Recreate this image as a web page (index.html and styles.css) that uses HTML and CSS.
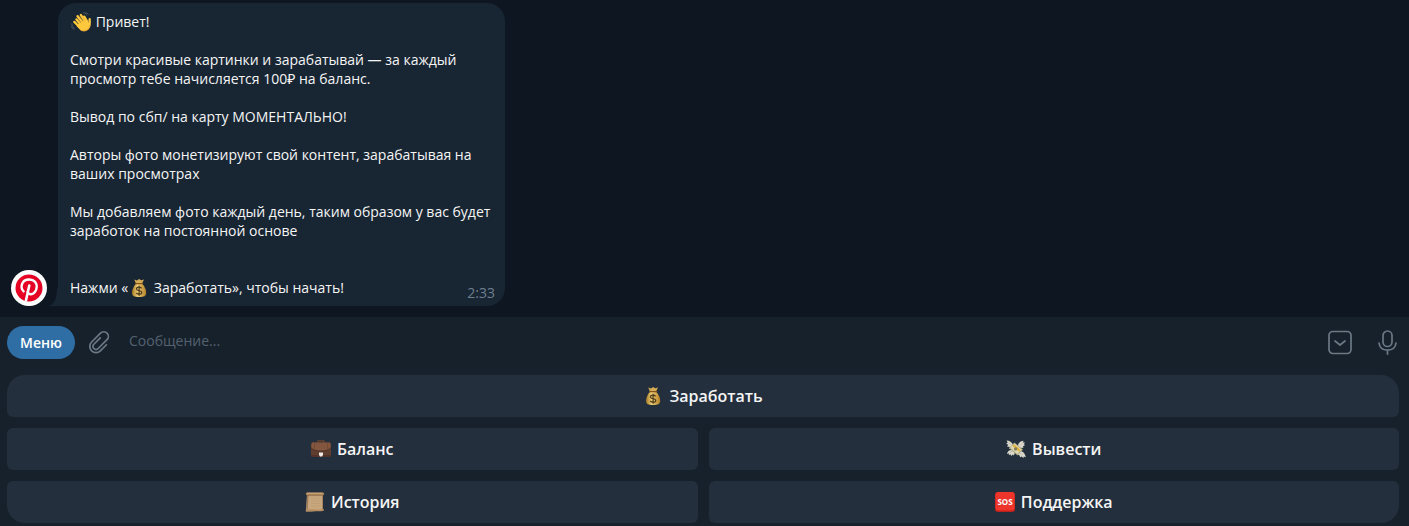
FILE: index.html
```html
<!DOCTYPE html>
<html lang="ru">
<head>
  <meta charset="UTF-8" />
  <meta name="viewport" content="width=device-width, initial-scale=1.0"/>
  <title>Чат</title>
  <link rel="stylesheet" href="styles.css">
</head>
<body>

  <!-- Shared icons -->
  <svg class="sprite" aria-hidden="true">
    <linearGradient id="gold" x1="0" x2="1" y1="0" y2="0">
      <stop offset="0" stop-color="#a57922"/>
      <stop offset=".4" stop-color="#f0cf78"/>
      <stop offset="1" stop-color="#b27f25"/>
    </linearGradient>
    <symbol id="money-bag" viewBox="0 0 20 20">
      <path d="M7 5.5 5.2 1.6 8 2.4 10 1l2.2 1.3 2.8-.8L13 5.5z" fill="#d5ac55"/>
      <path d="M7.3 5.5h5.6c2.6 2.6 4.3 6 4.3 9.4 0 2.9-2.2 4.1-7.1 4.1S3 17.8 3 14.9c0-3.4 1.7-6.8 4.3-9.4z" fill="url(#gold)"/>
      <path d="M6.6 5.7h7" stroke="#80551b" stroke-width="1.3" stroke-linecap="round"/>
      <path d="M12.6 10.3c-.6-.9-1.5-1.2-2.6-1.2-1.5 0-2.5.7-2.5 1.8 0 2.5 5.3 1 5.3 3.5 0 1.100-1.100 1.800-2.700 1.800-1.300 0-2.300-.5-2.900-1.400M10.100 7.700v10" fill="none" stroke="#4b3a1b" stroke-width="1.2"/>
    </symbol>
  </svg>

  <main class="chat">
    <div class="avatar">
      <svg viewBox="0 0 36 36" role="img" aria-label="Pinterest">
        <circle cx="18" cy="18" r="18" fill="#fff"/>
        <circle cx="18" cy="18" r="13.5" fill="#e60023"/>
        <path d="M12.6 21.400c-3.700-3.600-2.400-11.900 5.600-11.900 5.300 0 8 3.600 7.500 7.900-.5 4.600-3.700 7.200-6.400 6.800-1.600-.2-2.400-1.300-2.600-2.400" fill="none" stroke="#fff" stroke-width="2.400" stroke-linecap="round"/>
        <path d="M18.3 15.500 15 30.200" stroke="#fff" stroke-width="2.600" stroke-linecap="round"/>
      </svg>
    </div>
    <div class="message">
      <p>
        <svg class="emoji" viewBox="0 0 20 20" role="img" aria-label="Привет">
          <g fill="none" stroke-linecap="round">
            <path d="M5.500 7.500 11 14M6.600 4.200l6 7.500M9.900 3.100l4.800 7.200M13.200 4.700l2.900 5" stroke="#ffc83d" stroke-width="2.500"/>
            <path d="M3.300 9.900 9 15.500" stroke="#ffc83d" stroke-width="2.300"/>
            <path d="m7.300 8 3.600 4.100M9.200 5.500l3.600 5M12.100 5.100l2.600 4.200" stroke="#dc982b" stroke-width=".5"/>
            <path d="M.8 11.800c.1 2 .9 3.400 2.600 4.400M.5 14.600c.5 1.200 1.200 2.100 2.300 2.800M12.300.8c1.500.2 2.700.9 3.400 2.100M14.900.5c1 .4 1.700 1 2.300 1.800" stroke="#59666f" stroke-width=".8"/>
          </g>
          <path d="m8 11.500 7.800-3.700 1.500 3c.3-2-.1-3.700.6-4.500.7-.7 1.900-.3 1.900 1.100.1 3.800.4 7.600-2.300 10.100-3 2.700-6.600 2.100-9.200-.5L5.500 14z" fill="#ffc83d"/>
          <path d="M9.600 18.200c3.800 1.700 8.200-.3 9.200-4.600" fill="none" stroke="#e9a32c" stroke-width=".9"/>
        </svg>
        Привет!
      </p>
      <p>Смотри красивые картинки и зарабатывай — за каждый<br>просмотр тебе начисляется 100₽ на баланс.</p>
      <p>Вывод по сбп/ на карту МОМЕНТАЛЬНО!</p>
      <p>Авторы фото монетизируют свой контент, зарабатывая на<br>ваших просмотрах</p>
      <p>Мы добавляем фото каждый день, таким образом у вас будет<br>заработок на постоянной основе</p>
      <div class="message-end">
        <p>Нажми «<svg class="emoji" aria-hidden="true"><use href="#money-bag"/></svg> Заработать», чтобы начать!</p>
        <time datetime="02:33">2:33</time>
      </div>
      <svg class="tail" viewBox="0 0 9 18" aria-hidden="true"><path d="M9 0v18H0c5-2 8-7 8-18z"/></svg>
    </div>
  </main>

  <footer class="panel">
    <form class="composer">
      <button type="button" class="menu">Меню</button>
      <button type="button" class="icon" aria-label="Прикрепить файл">
        <svg viewBox="0 0 26 26"><path d="M19.500 9v8.500a6.200 6.200 0 0 1-12.400 0V5a4.600 4.600 0 0 1 9.200 0v12.500a3 3 0 0 1-6 0V8.500" transform="rotate(45 13 13)"/></svg>
      </button>
      <input type="text" placeholder="Сообщение..." aria-label="Сообщение">
      <button type="button" class="icon keyboard-toggle" aria-label="Скрыть клавиатуру">
        <svg viewBox="0 0 26 26"><rect x="2" y="1.500" width="22" height="22" rx="4"/><path d="m8 11 5 4 5-4"/></svg>
      </button>
      <button type="button" class="icon" aria-label="Голосовое сообщение">
        <svg viewBox="0 0 26 26"><rect x="9" y="1" width="9" height="15.500" rx="4.500"/><path d="M5 13c.5 4.600 3.800 7.100 8.500 7.100s8-2.500 8.500-7.100M13.500 20.100v4"/></svg>
      </button>
    </form>

    <div class="keyboard">
      <button type="button" class="wide">
        <svg class="emoji" aria-hidden="true"><use href="#money-bag"/></svg>
        Заработать
      </button>
      <button type="button">
        <svg class="emoji" viewBox="0 0 20 20" aria-hidden="true">
          <path d="M7 4V1.800h6V4" fill="none" stroke="#70442e" stroke-width="1.200"/>
          <rect y="3.500" width="20" height="14.500" rx="1.500" fill="#5f3d2f"/>
          <path d="M1 3.500h18l1 5c-2 2.600-5 3.400-10 3.400S2 11.100 0 8.500z" fill="#82563f"/>
          <path d="M0 8.600c2 2.500 5 3.400 10 3.400s8-.9 10-3.400" fill="none" stroke="#482c23" stroke-width=".8"/>
          <path d="M3.500 4v7M16.500 4v7" stroke="#6b4433" stroke-width=".6"/>
          <path d="M0 17h20" stroke="#432b24"/>
          <path d="M8 13.500h4v2.600l-1 1.400H9l-1-1.400z" fill="#eee9e4"/>
        </svg>
        Баланс
      </button>
      <button type="button">
        <svg class="emoji" viewBox="0 0 20 20" aria-hidden="true">
          <path d="M7 6C6 3 3.500 1.500.5 1.500l1.200 2L.2 4.700l2.100 1L1 7.500l3 .5-1 1.700 3.500.3zM12 7c0-3 2-5 5.500-5.300l-.6 1.700 2.100.1-1.300 1.700 1.500.8-2.200 1.200.5 1.500-3.300.4zM6.500 11C3.500 10.500 1.500 12 1 15l1.800-.7.1 1.900 1.600-.9.700 1.700 1.600-1.600 1 1.100 1.100-2.500zM14 12c3 0 5 2.500 5.800 6.200l-2-.8-.3 1.500-2-1.400-1.300.7-.8-2-1.900-.7z" fill="#dad7cb"/>
          <path d="m3 9 5.500-5.500 8.500 7-5.500 6z" fill="#aaa581"/>
          <path d="m4.200 8.800 4.400-4.200 7 5.900-4.300 4.700z" fill="#dcd6b0"/>
          <path d="m6.700 7 6.400 5.500 1.500-1.600-6.300-5.300z" fill="#e0ad35"/>
          <circle cx="9.600" cy="9.900" r="1.600" fill="#7d7b5c"/>
          <path d="m2.500 3.500 3 2.500M14 6.500l2.500-2.500M3.500 13.500l3-1.500M14 14l3 2" stroke="#aaa99d" stroke-width=".5"/>
        </svg>
        Вывести
      </button>
      <button type="button">
        <svg class="emoji" viewBox="0 0 20 20" aria-hidden="true">
          <path d="M2 2.500h16V19c-5-1-11 .8-17 .4z" fill="#c8a77e"/>
          <path d="M2 3h1.500l-.7 15H1.500zM17.200 3h.8v15h-.8z" fill="#a07c57"/>
          <rect x=".8" y=".5" width="18.400" height="2.800" rx="1.400" fill="#a98258"/>
          <path d="M2 1.200h15.500" stroke="#dfbd91" stroke-width=".8"/>
          <path d="M2.500 3.600h15" stroke="#806040" stroke-width=".6"/>
          <path d="M6 6.500h9M6 9h9M6 11.500h9M6 14h9" stroke="#b8946a" stroke-width=".5"/>
          <path d="M.8 17.500c5-.5 12 .4 18-.6v1.900c-5 1.300-12-.2-18 .8z" fill="#b68e61"/>
        </svg>
        История
      </button>
      <button type="button">
        <svg class="emoji" viewBox="0 0 20 20" aria-hidden="true">
          <rect width="20" height="20" rx="3" fill="#bf211c"/>
          <rect x=".5" width="19" height="18.500" rx="3" fill="#ee352b"/>
          <text class="sos" x="10" y="13">SOS</text>
        </svg>
        Поддержка
      </button>
    </div>
  </footer>

</body>
</html>
```
FILE: styles.css
```css
* {
  box-sizing: border-box;
}

body {
  margin: 0;
  min-height: 100vh;
  display: flex;
  flex-direction: column;
  background: #0e1621;
  color: #f5f5f5;
  font-family: "Open Sans", "Noto Sans", sans-serif;
  font-size: 14px;
}

button,
input {
  font: inherit;
  color: inherit;
  border: none;
  background: none;
  padding: 0;
}

button {
  cursor: pointer;
}

.sprite {
  position: absolute;
  width: 0;
  height: 0;
}

.emoji {
  width: 20px;
  height: 20px;
  flex: none;
}

/* Chat */
.chat {
  flex: 1;
  display: flex;
  align-items: flex-end;
  gap: 11px;
  padding: 3px 11px 11px;
}

.avatar {
  flex: none;
  width: 36px;
  height: 36px;
}

.avatar svg {
  display: block;
}

.message {
  position: relative;
  flex: 0 1 447px;
  padding: 9px 10px 9px 12px;
  border-radius: 18px 18px 18px 0;
  background: #182533;
  line-height: 19px;
}

.message p {
  margin: 0 0 19px;
}

.message .emoji {
  margin: -5px 1px;
  vertical-align: baseline;
}

.message-end {
  display: flex;
  justify-content: space-between;
  align-items: flex-end;
  margin-top: 38px;
}

.message-end p {
  margin: 0;
}

.message time {
  color: #6d7f8f;
  margin-bottom: -5px;
}

.tail {
  position: absolute;
  right: 100%;
  bottom: 0;
  width: 9px;
  height: 18px;
  fill: #182533;
}

/* Message box and bot keyboard */
.panel {
  background: #17212b;
}

.composer {
  display: flex;
  align-items: center;
  gap: 11px;
  height: 51px;
  padding: 0 9px 0 7px;
}

.menu {
  height: 33px;
  padding: 0 13px;
  border-radius: 17px;
  background: #2f6ea5;
  color: #fff;
  font-weight: 600;
}

.icon {
  width: 26px;
  height: 26px;
}

.icon svg {
  display: block;
  fill: none;
  stroke: #6b7985;
  stroke-width: 1.7;
  stroke-linecap: round;
  stroke-linejoin: round;
}

.keyboard-toggle {
  margin-right: 10px;
}

.composer input {
  flex: 1;
  min-width: 0;
  height: 33px;
  padding: 0 6px 4px;
  outline: none;
}

.composer input::placeholder {
  color: #536170;
  opacity: 1;
}

.keyboard {
  display: grid;
  grid-template-columns: 1fr 1fr;
  gap: 11px;
  padding: 7px 10px 3px 7px;
}

.keyboard button {
  display: flex;
  align-items: center;
  justify-content: center;
  gap: 6px;
  height: 42px;
  border-radius: 6px;
  background: #242f3d;
  font-size: 16px;
  font-weight: 600;
}

.keyboard .wide {
  grid-column: 1 / -1;
  border-radius: 18px 18px 6px 6px;
}

.keyboard button:nth-last-child(2) {
  border-bottom-left-radius: 18px;
}

.keyboard button:last-child {
  border-bottom-right-radius: 18px;
}

.sos {
  fill: #fff;
  font-size: 8px;
  font-weight: 700;
  text-anchor: middle;
}
```
